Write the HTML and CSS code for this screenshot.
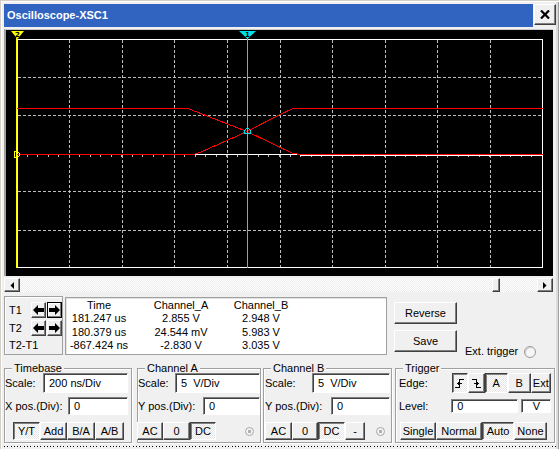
FILE: index.html
```html
<!DOCTYPE html>
<html>
<head>
<meta charset="utf-8">
<link rel="stylesheet" href="styles.css">
</head>
<body>
<div class="window">
  <div class="titlebar">
    <div class="title">Oscilloscope-XSC1</div>
    <div class="close"><svg width="10" height="9" viewBox="0 0 10 9"><path d="M1 0.5L9 8.5M9 0.5L1 8.5" stroke="#000" stroke-width="2.2"/></svg></div>
  </div>
  <div class="screenwrap">
    <svg class="scope" width="547" height="246" viewBox="6 30 547 246">
      <rect x="6" y="30" width="547" height="246" fill="#000"/>
      <g stroke="#BDBDBD" stroke-width="1" stroke-dasharray="3 2" fill="none" shape-rendering="crispEdges">
        <path d="M69.5 40V268M122.5 40V268M174.5 40V268M227.5 40V268M280.5 40V268M332.5 40V268M385.5 40V268M437.5 40V268M490.5 40V268"/>
        <path d="M18 77.5H543M18 115.5H543M18 154.5H543M18 191.5H543M18 230.5H543"/>
      </g>
      <path d="M17 155.5H543" stroke="#BDBDBD" stroke-width="2" stroke-dasharray="1 9.52" stroke-dashoffset="-9.52" shape-rendering="crispEdges"/>
      <rect x="17.5" y="39.5" width="525" height="228" fill="none" stroke="#fff" shape-rendering="crispEdges"/>
      <g fill="none" stroke-width="1" shape-rendering="crispEdges">
        <path d="M17 154.5H193" stroke="#FF0000"/>
        <path d="M193 154.5H298" stroke="#fff"/>
        <path d="M300 155.5H543" stroke="#fff"/>
        <path d="M17 108.5H188L193 110.5L247 131.5L293 153.5L300 154.5H543" stroke="#FF0000"/>
        <path d="M193 154.5L200 152.5L247 131.5L280 114.5L293 108.5H543" stroke="#FF0000"/>
      </g>
      <path d="M16.5 38V268" stroke="#FFFF00" shape-rendering="crispEdges"/>
      <path d="M247.5 38V268" stroke="#00E0E8" shape-rendering="crispEdges"/>
      <polygon points="11,31 24,31 17.5,39" fill="#FFFF00"/>
      <text x="17.5" y="37" font-family="DejaVu Sans" font-size="7" font-weight="bold" text-anchor="middle" fill="#000">2</text>
      <polygon points="239,31 256,31 247.5,39" fill="#00E0E8"/>
      <text x="247.5" y="37" font-family="DejaVu Sans" font-size="7" font-weight="bold" text-anchor="middle" fill="#000">1</text>
      <path d="M14.5 151.5H17.5L19.5 153.5V155.5L17.5 157.5H14.5Z" fill="none" stroke="#FFFF00" shape-rendering="crispEdges"/>
      <path d="M244.5 133.5V130.5L247.5 127.5L250.5 130.5V133.5Z" fill="none" stroke="#00E0E8" shape-rendering="crispEdges"/>
    </svg>
  </div>
  <div class="hscroll">
    <div class="sbtn"><svg width="4" height="7" viewBox="0 0 4 7"><path d="M4 0V7L0.5 3.5Z" fill="#000"/></svg></div>
    <div class="track"><div class="thumb"></div></div>
    <div class="sbtn"><svg width="4" height="7" viewBox="0 0 4 7"><path d="M0 0V7L3.5 3.5Z" fill="#000"/></svg></div>
  </div>
  <div class="meas">
    <div class="cursors">
      <span class="tl">T1</span>
      <span class="abtn"><svg width="11" height="10" viewBox="0 0 11 10"><path d="M0 5L5 0V3H11V7H5V10Z" fill="#000"/></svg></span>
      <span class="abtn pressed"><svg width="11" height="10" viewBox="0 0 11 10"><path d="M11 5L6 0V3H0V7H6V10Z" fill="#000"/></svg></span>
      <span class="tl">T2</span>
      <span class="abtn"><svg width="11" height="10" viewBox="0 0 11 10"><path d="M0 5L5 0V3H11V7H5V10Z" fill="#000"/></svg></span>
      <span class="abtn"><svg width="11" height="10" viewBox="0 0 11 10"><path d="M11 5L6 0V3H0V7H6V10Z" fill="#000"/></svg></span>
      <span class="tl span3">T2-T1</span>
    </div>
    <div class="readout">
      <span>Time</span><span>Channel_A</span><span>Channel_B</span>
      <span>181.247 us</span><span>2.855 V</span><span>2.948 V</span>
      <span>180.379 us</span><span>24.544 mV</span><span>5.983 V</span>
      <span>-867.424 ns</span><span>-2.830 V</span><span>3.035 V</span>
    </div>
    <div class="actions">
      <div class="btn big">Reverse</div>
      <div class="btn big">Save</div>
    </div>
    <div class="ext"><span>Ext. trigger</span><span class="radio big-radio"></span></div>
  </div>
  <div class="groups">
    <fieldset class="grp tb">
      <legend>Timebase</legend>
      <div class="row r1"><span class="lbl">Scale:</span><span class="field f-tbs">200 ns/Div</span></div>
      <div class="row r2"><span class="lbl">X pos.(Div):</span><span class="field f-tbx">0</span></div>
      <div class="row r3 tbb"><span class="btn pressed w27">Y/T</span><span class="btn w27">Add</span><span class="btn w28">B/A</span><span class="btn w29">A/B</span></div>
    </fieldset>
    <fieldset class="grp cha">
      <legend>Channel A</legend>
      <div class="row r1"><span class="lbl">Scale:</span><span class="field f-chs">5&nbsp; V/Div</span></div>
      <div class="row r2"><span class="lbl">Y pos.(Div):</span><span class="field f-chy">0</span></div>
      <div class="row r3"><span class="btn w26">AC</span><span class="btn w27">0</span><span class="btn pressed w26">DC</span><span class="radio small-radio"></span></div>
    </fieldset>
    <fieldset class="grp chb">
      <legend>Channel B</legend>
      <div class="row r1"><span class="lbl">Scale:</span><span class="field f-cbs">5&nbsp; V/Div</span></div>
      <div class="row r2"><span class="lbl">Y pos.(Div):</span><span class="field f-cby">0</span></div>
      <div class="row r3"><span class="btn w27">AC</span><span class="btn w26">0</span><span class="btn pressed w27">DC</span><span class="btn w20">-</span><span class="radio small-radio"></span></div>
    </fieldset>
    <fieldset class="grp trg">
      <legend>Trigger</legend>
      <div class="row r1"><span class="lbl">Edge:</span>
        <span class="ebtns">
        <span class="btn pressed w16"><svg width="9" height="9" viewBox="0 0 9 9"><path d="M0 8.5H4.5V0.5H9M2 4.5H7M4.5 2.5L2.5 4.5L4.5 6.5" fill="none" stroke="#000" shape-rendering="crispEdges"/></svg></span>
        <span class="btn w17"><svg width="9" height="9" viewBox="0 0 9 9"><path d="M0 0.5H4.5V8.5H9M2 4.5H7M4.5 2.5L6.5 4.5L4.5 6.5" fill="none" stroke="#000" shape-rendering="crispEdges"/></svg></span>
        </span>
        <span class="btn pressed w23">A</span><span class="btn w23">B</span><span class="btn w20">Ext</span></div>
      <div class="row r2"><span class="lbl">Level:</span><span class="field f-lvl">0</span><span class="field f-v">V</span></div>
      <div class="row r3"><span class="btn w36">Single</span><span class="btn w46">Normal</span><span class="btn pressed w32">Auto</span><span class="btn w33">None</span></div>
    </fieldset>
  </div>
  <div class="dots"></div>
</div>
</body>
</html>
```

FILE: styles.css
```css
* { box-sizing: border-box; }
html, body { margin: 0; padding: 0; }
body {
  width: 559px; height: 449px; overflow: hidden;
  background: #F0F0F0;
  font-family: "Liberation Sans", Arial, sans-serif;
  font-size: 11px; color: #000;
}
.window {
  width: 559px; height: 449px; overflow: hidden;
  background: #F0F0F0;
  padding: 4px 3px 0 4px;
  box-shadow: inset 1px 1px 0 #D4D0C8, inset 2px 2px 0 #fff, inset -1px 0 0 #A0A0A0, inset -3px 0 0 #DCDCDC;
}
.titlebar { display: flex; height: 23px; width: 552px; }
.title {
  flex: 1; background: #3163C1; color: #fff;
  font-weight: bold; font-size: 11px; line-height: 23px; padding-left: 3px;
}
.close {
  width: 22px; height: 21px; margin-left: 1px;
  background: #F0F0F0;
  border: 1px solid; border-color: #fff #404040 #404040 #fff;
  box-shadow: inset -1px -1px 0 #808080;
  display: flex; align-items: center; justify-content: center;
}
.screenwrap {
  margin-top: 2px; width: 549px; height: 247px;
  border-left: 2px solid #A0A0A0; border-top: 1px solid #C8C8C8;
}
.scope { display: block; }
.hscroll { margin-top: 2px; width: 549px; height: 14px; display: flex; }
.sbtn {
  width: 16px; height: 14px; background: #F0F0F0;
  border: 1px solid; border-color: #fff #404040 #404040 #fff;
  box-shadow: inset -1px -1px 0 #808080;
  display: flex; align-items: center; justify-content: center;
}
.track {
  flex: 1; display: flex; justify-content: flex-end; padding-right: 37px;
  background: repeating-conic-gradient(#EDEDED 0 25%, #FFFFFF 0 50%) 0 0 / 2px 2px;
}
.thumb {
  width: 8px; height: 14px; background: #F0F0F0;
  border: 1px solid; border-color: #fff #404040 #404040 #fff;
  box-shadow: inset -1px -1px 0 #808080;
}
.meas { margin-top: 4px; height: 59px; display: flex; align-items: flex-start; }
.cursors {
  width: 59px; height: 59px;
  border: 1px solid #A0A0A0; box-shadow: inset 1px 1px 0 #fff;
  padding: 5px 0 0 4px;
  display: grid; grid-template-columns: 21px 15px 15px; column-gap: 1px;
  grid-template-rows: 16px 16px 14px; row-gap: 2px;
  align-items: center;
}
.tl { line-height: 13px; }
.span3 { grid-column: 1 / 4; align-self: end; }
.abtn {
  width: 15px; height: 16px; background: #F0F0F0;
  border: 1px solid; border-color: #fff #404040 #404040 #fff;
  box-shadow: inset -1px -1px 0 #808080;
  display: flex; align-items: center; justify-content: center;
}
.abtn.pressed { border-color: #000; box-shadow: inset -1px -1px 0 #808080, inset 1px 1px 0 #fff; }
.readout {
  margin-left: 2px; margin-top: 1px;
  width: 322px; height: 58px; background: #fff;
  border: 1px solid #A0A0A0; box-shadow: inset 1px 1px 0 #E3E3E3;
  display: grid; grid-template-columns: 66px 98px 62px; grid-auto-rows: 13.4px;
  padding-top: 1px; text-align: center; line-height: 13.4px;
}
.actions { margin-left: 7px; margin-top: 6px; display: flex; flex-direction: column; gap: 6px; }
.btn {
  display: flex; align-items: center; justify-content: center;
  background: #F0F0F0;
  border: 1px solid; border-color: #fff #404040 #404040 #fff;
  box-shadow: inset -1px -1px 0 #808080;
  height: 18px; line-height: 13px;
}
.btn.pressed {
  border-color: #404040 #fff #fff #404040;
  box-shadow: inset 1px 1px 0 #808080;
  background: repeating-conic-gradient(#E6E6E6 0 25%, #FFFFFF 0 50%) 0 0 / 2px 2px;
}
.btn.big { width: 63px; height: 22px; }
.ext { margin-left: 8px; align-self: flex-end; margin-bottom: -3px; display: flex; align-items: center; gap: 6px; line-height: 13px; }
.radio { display: block; border-radius: 50%; }
.big-radio { width: 12px; height: 12px; border: 1px solid #9A9A9A; background: #F6F6F6; box-shadow: inset 1px 1px 0 #D0D0D0; }
.small-radio { width: 9px; height: 9px; border: 1px solid #A8A8A8; background: radial-gradient(circle, #B0B0B0 0 1.5px, #F4F4F4 2px); margin-left: auto; margin-right: 6px; }
.groups { margin-top: 7px; display: flex; }
.grp {
  margin: 0; padding: 0; height: 81px;
  border: 1px solid #A0A0A0;
  box-shadow: inset 1px 1px 0 #fff, 1px 1px 0 #fff;
  min-width: 0;
}
.grp legend { padding: 0 2px; margin-left: 7px; line-height: 13px; background: #F0F0F0; }
.tb { width: 128px; }
.cha { width: 124px; margin-left: 5px; }
.chb { width: 129px; margin-left: 2px; }
.trg { width: 160px; margin-left: 3px; }
.row { display: flex; align-items: center; }
.r1 { margin-top: -2px; height: 20px; }
.r2 { margin-top: 4px; height: 18px; }
.r3 { margin-top: 7px; height: 18px; }
.lbl { line-height: 13px; }
.field {
  display: flex; align-items: center; height: 100%;
  background: #fff; padding-left: 5px;
  border: 1px solid; border-color: #808080 #fff #fff #808080;
  box-shadow: inset 1px 1px 0 #404040;
  margin-left: auto;
}
.tb .lbl { margin-left: 0; }
.f-tbs { width: 85px; margin-right: 3px; }
.f-tbx { width: 60px; margin-right: 3px; }
.f-chs { width: 85px; margin-right: 0; }
.f-chy { width: 57px; margin-right: 0; }
.f-cbs { width: 78px; margin-right: 1px; }
.f-cby { width: 59px; margin-right: 1px; }
.tbb { padding-left: 8px; }
.cha .r1, .cha .r2, .cha .r3 { margin-left: -1px; }
.cha .lbl { margin-left: 1px; }
.chb .lbl { margin-left: 1px; }
.chb .r3 { padding-left: 1px; }
.trg .lbl { margin-left: 3px; }
.ebtns { display: flex; margin-left: 24px; }
.trg .r1 .btn { height: 20px; }
.f-lvl { width: 67px; margin-left: 23px; height: 14px; }
.f-v { width: 30px; margin-left: 3px; height: 14px; padding-left: 0; justify-content: center; }
.trg .r3 { padding-left: 4px; }
.w16 { width: 16px; } .w17 { width: 17px; } .w20 { width: 20px; } .w23 { width: 23px; }
.w26 { width: 26px; } .w27 { width: 27px; } .w28 { width: 28px; } .w29 { width: 29px; }
.w32 { width: 32px; } .w33 { width: 33px; } .w36 { width: 36px; } .w46 { width: 46px; }
.dots {
  margin-top: 3px; height: 1px; width: 552px;
  background: repeating-linear-gradient(90deg, #000 0 1px, transparent 1px 3.3px);
}
```
